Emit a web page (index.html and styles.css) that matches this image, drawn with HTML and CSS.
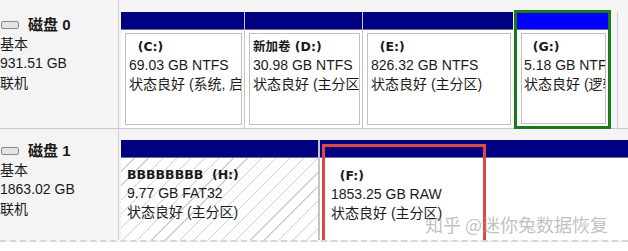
FILE: index.html
```html
<!DOCTYPE html>
<html lang="zh-CN">
<head>
    <meta charset="UTF-8">
    <title>磁盘管理</title>
    <link rel="stylesheet" href="styles.css">
</head>
<body>

    <div class="disk disk-first">
        <div class="disk-info">
            <p class="disk-name"><span class="disk-icon"></span>磁盘 0</p>
            <p>基本</p>
            <p>931.51 GB</p>
            <p>联机</p>
        </div>
        <div class="volumes">
            <div class="vol" style="width:123px">
                <div class="vol-bar"></div>
                <div class="vol-body">
                    <p class="vol-name">&nbsp;&nbsp;(C:)</p>
                    <p>69.03 GB NTFS</p>
                    <p>状态良好 (系统, 启动, 页面文件)</p>
                </div>
            </div>
            <div class="vol" style="width:117px">
                <div class="vol-bar"></div>
                <div class="vol-body">
                    <p class="vol-name">新加卷 (D:)</p>
                    <p>30.98 GB NTFS</p>
                    <p>状态良好 (主分区)</p>
                </div>
            </div>
            <div class="vol" style="width:150px">
                <div class="vol-bar"></div>
                <div class="vol-body">
                    <p class="vol-name">&nbsp;&nbsp;(E:)</p>
                    <p>826.32 GB NTFS</p>
                    <p>状态良好 (主分区)</p>
                </div>
            </div>
            <div class="vol vol-selected" style="width:97px">
                <div class="vol-bar"></div>
                <div class="vol-body">
                    <p class="vol-name">&nbsp;&nbsp;(G:)</p>
                    <p>5.18 GB NTFS</p>
                    <p>状态良好 (逻辑驱动器)</p>
                </div>
            </div>
            <div class="vol-rest"></div>
        </div>
    </div>

    <div class="disk disk-second">
        <div class="disk-info">
            <p class="disk-name"><span class="disk-icon"></span>磁盘 1</p>
            <p>基本</p>
            <p>1863.02 GB</p>
            <p>联机</p>
        </div>
        <div class="volumes">
            <div class="vol vol-hatched" style="width:197px">
                <div class="vol-bar"></div>
                <div class="vol-body">
                    <p class="vol-name">BBBBBBBB&nbsp;&nbsp;(H:)</p>
                    <p>9.77 GB FAT32</p>
                    <p>状态良好 (主分区)</p>
                </div>
            </div>
            <div class="vol vol-wide">
                <div class="vol-bar"></div>
                <div class="vol-body">
                    <p class="vol-name">&nbsp;&nbsp;(F:)</p>
                    <p>1853.25 GB RAW</p>
                    <p>状态良好 (主分区)</p>
                </div>
                <div class="mark-box"></div>
            </div>
        </div>
    </div>

    <div class="watermark">知乎 @迷你兔数据恢复</div>

</body>
</html>
```

FILE: styles.css
```css
body {
    margin: 0;
    width: 628px;
    height: 251px;
    overflow: hidden;
    position: relative;
    background-color: #ffffff;
    font-family: 'Liberation Sans', 'Noto Sans CJK SC', sans-serif;
    font-size: 14px;
    color: #1a1a1a;
}
p {
    margin: 0;
    height: 19px;
    line-height: 19px;
    white-space: nowrap;
}
.disk {
    display: flex;
    background-color: #f4f4f4;
}
.disk-first {
    height: 128px;
    border-bottom: 1px solid #c9c9c9;
}
.disk-second {
    height: 111px;
    border-bottom: 2px dashed #d6d6d6;
}
.disk-info {
    width: 118px;
    flex: none;
    border-right: 1px solid #d0d0d0;
    padding-top: 15px;
    overflow: hidden;
}
.disk-second .disk-info {
    padding-top: 12px;
}
.disk-info p {
    height: 19.5px;
    line-height: 19.5px;
}
.disk-name {
    font-weight: bold;
    font-size: 15px;
}
.disk-icon {
    display: inline-block;
    width: 16px;
    height: 6px;
    margin: 0 9px 2px 1px;
    border: 1px solid #8a8a8a;
    border-radius: 2px;
    background-color: #e4e4e4;
    vertical-align: middle;
}
.volumes {
    display: flex;
    padding-left: 2px;
    padding-top: 11px;
    background-color: #f4f4f4;
    flex: 1;
    min-width: 0;
}
.disk-first .volumes {
    padding-top: 12px;
}
.vol {
    flex: none;
    display: flex;
    flex-direction: column;
    background-color: #ffffff;
    border-left: 1px solid #c4c4c4;
    overflow: hidden;
    position: relative;
}
.vol:first-child {
    border-left: none;
}
.vol-rest {
    width: 6px;
    border-right: 1px solid #d0d0d0;
}
.vol-bar {
    height: 17px;
    flex: none;
    background-color: #000080;
    border-bottom: 1px solid #6c6c9c;
}
.vol-body {
    flex: 1;
    margin: 3px 2px 3px 4px;
    border: 1px solid #c0c0c0;
    padding: 3px 0 0 3px;
    overflow: hidden;
}
.vol-name {
    font-weight: bold;
    font-family: 'DejaVu Sans', 'Noto Sans CJK SC', sans-serif;
    font-size: 12.5px;
}
.vol-selected {
    box-sizing: border-box;
    border: 3px solid #1a7a1a;
    margin: -2px 0 -1px 1px;
}
.vol-selected .vol-bar {
    background-color: #0000ff;
    height: 16px;
}
.vol-selected .vol-body {
    margin: 3px 2px 2px 4px;
    padding-left: 2px;
}
.vol-hatched .vol-body {
    margin: 0;
    border: none;
    padding: 7px 0 0 6px;
    background: repeating-linear-gradient(135deg, #ffffff 0, #ffffff 9px, #cfcfcf 9px, #cfcfcf 10px);
}
.vol-wide {
    flex: 1;
    border-left: 2px solid #c4c4c4;
}
.vol-wide .vol-body {
    border: none;
    margin: 4px 0 0 5px;
    padding: 4px 0 0 6px;
}
.mark-box {
    position: absolute;
    left: 2px;
    top: 4px;
    width: 158px;
    height: 93px;
    border: 3px solid #e04848;
}
.watermark {
    position: absolute;
    left: 425px;
    top: 214px;
    line-height: 20px;
    font-family: 'Noto Sans CJK SC', sans-serif;
    font-size: 18px;
    color: rgba(150, 150, 150, 0.6);
    white-space: nowrap;
}
```
